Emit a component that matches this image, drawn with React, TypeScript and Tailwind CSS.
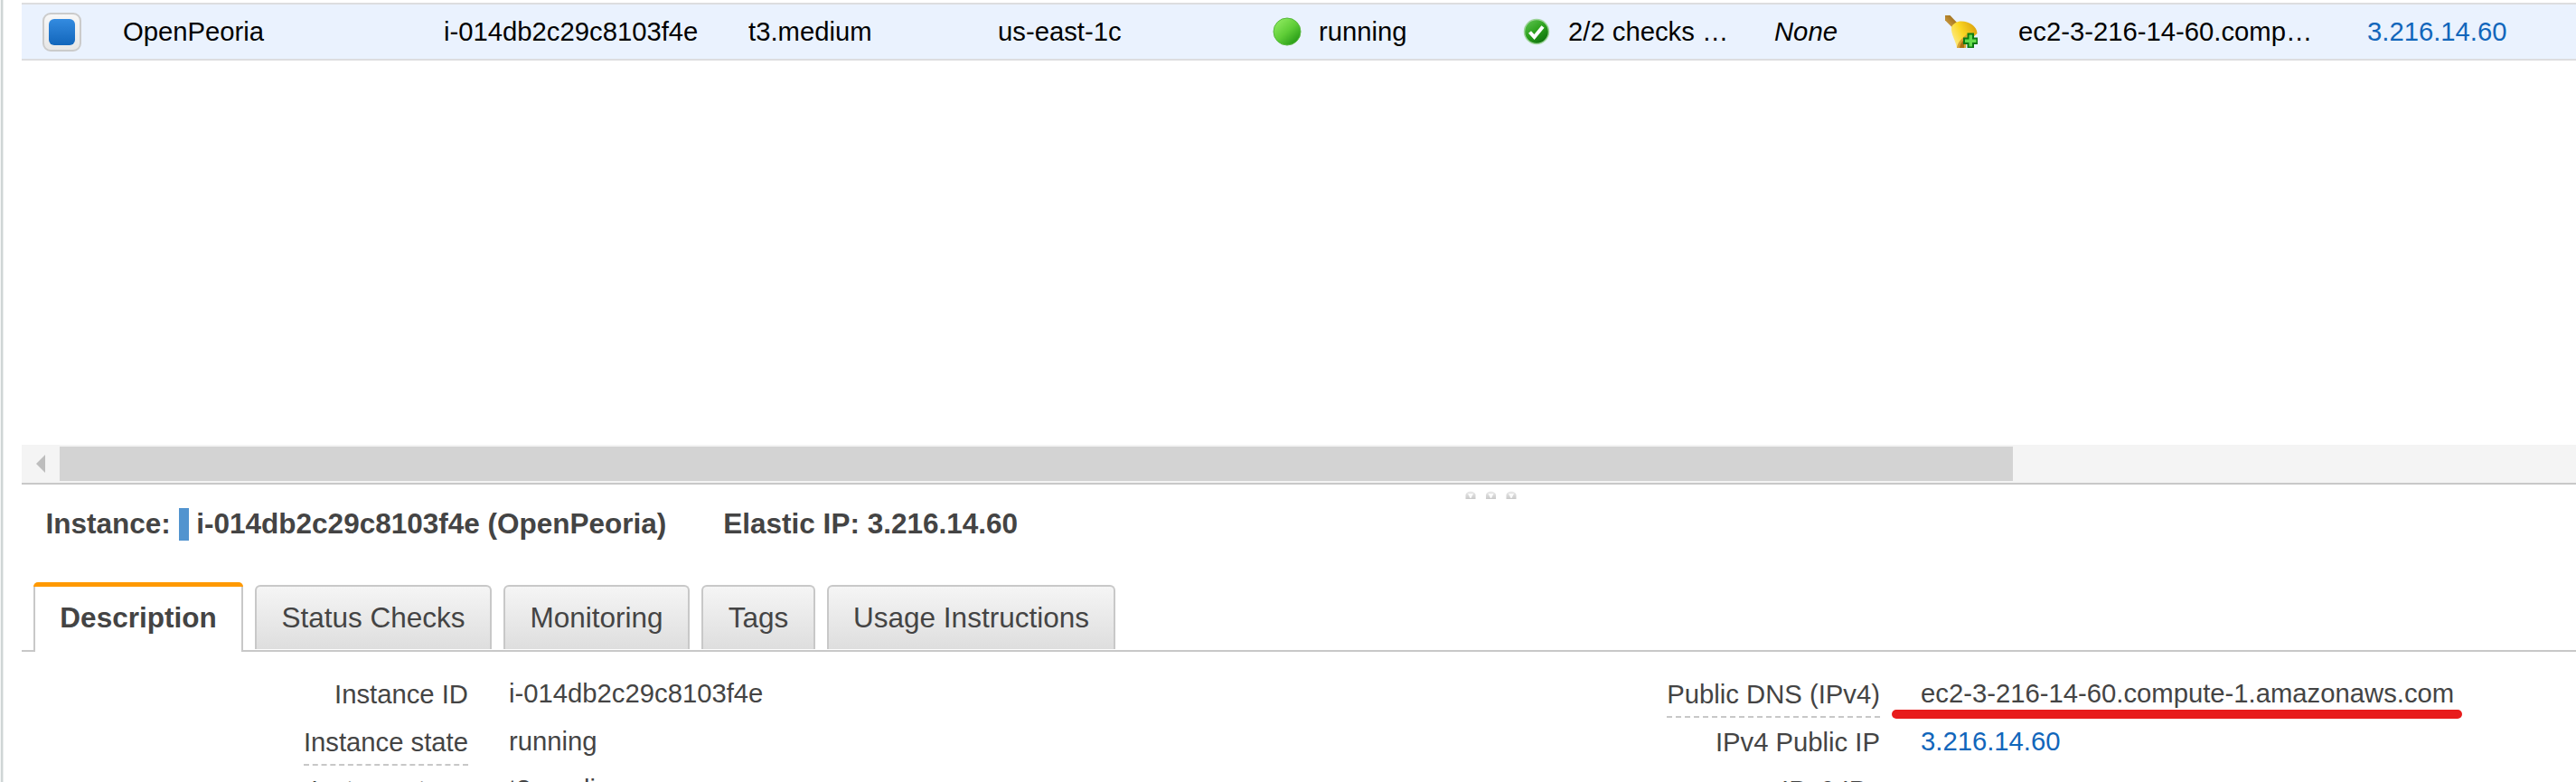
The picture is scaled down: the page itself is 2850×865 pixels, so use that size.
import React from "react";

function CheckIcon() {
  return (
    <svg className="h-[30px] w-[30px] shrink-0" viewBox="0 0 30 30">
      <defs>
        <linearGradient id="ck" x1="0.1" y1="0" x2="0.8" y2="1">
          <stop offset="0" stopColor="#5fc552" />
          <stop offset="0.5" stopColor="#2ba01c" />
          <stop offset="1" stopColor="#0b6d0b" />
        </linearGradient>
      </defs>
      <circle cx="15" cy="15" r="13.5" fill="url(#ck)" stroke="#9ed49a" strokeWidth="1.5" />
      <path d="M7.500 15.500l5 5.500L22 9.500" fill="none" stroke="#fff" strokeWidth="4" />
    </svg>
  );
}

function RunningIcon() {
  return (
    <svg className="h-[32px] w-[32px] shrink-0" viewBox="0 0 32 32">
      <defs>
        <linearGradient id="run" x1="0.15" y1="0.1" x2="0.85" y2="0.9">
          <stop offset="0" stopColor="#8be85c" />
          <stop offset="0.5" stopColor="#5fcd37" />
          <stop offset="1" stopColor="#259a16" />
        </linearGradient>
      </defs>
      <circle cx="16" cy="16" r="15" fill="url(#run)" stroke="#56b83c" strokeWidth="1" />
    </svg>
  );
}

function AlarmIcon() {
  return (
    <svg className="h-[36px] w-[36px] shrink-0" viewBox="0 0 36 36">
      <defs>
        <linearGradient id="bell" x1="0" y1="0.7" x2="1" y2="0.2">
          <stop offset="0" stopColor="#fdeb8c" />
          <stop offset="0.45" stopColor="#fbd723" />
          <stop offset="1" stopColor="#d99f0c" />
        </linearGradient>
        <linearGradient id="handle" x1="0" y1="1" x2="1" y2="0">
          <stop offset="0" stopColor="#d9a94e" />
          <stop offset="1" stopColor="#8f5f0c" />
        </linearGradient>
      </defs>
      <path d="M0 0H5.500L14 9L8.500 14L0 5.500Z" fill="url(#handle)" />
      <path d="M7 13C9 9 13 6.500 18 6.500C27 7 33 11 35 17L35.500 20L18 36H13C12 28 6 21 7 13Z" fill="url(#bell)" />
      <path d="M13 36C14 29 19 25 24 21L23 36Z" fill="#d8a232" />
      <path d="M16 36C16.500 32 18.500 29 21 27V36Z" fill="#a9700f" />
      <path d="M25.500 20.500h5.500v5h4.500v5.500H31v4.500h-5.500V31H21v-5.500h4.500Z" fill="#66dc4c" stroke="#0b7a12" strokeWidth="2" />
    </svg>
  );
}

const tabs: [string, string][] = [
  ["Status Checks", "w-[262px]"],
  ["Monitoring", "w-[206px]"],
  ["Tags", "w-[126px]"],
  ["Usage Instructions", "w-[319px]"],
];

function Grip() {
  return (
    <svg className="h-[9px] w-[58px]" viewBox="0 0 58 9">
      <defs>
        <linearGradient id="grip" x1="0" y1="0" x2="0" y2="1">
          <stop offset="0" stopColor="#ececec" />
          <stop offset="1" stopColor="#c9c9c9" />
        </linearGradient>
      </defs>
      {[0, 22.5, 45].map((x) => (
        <g key={x} transform={`translate(${x} 0)`}>
          <path d="M0.500 9V4Q2 0.500 6 0.500T11.500 4V9Z" fill="url(#grip)" />
          <path d="M3 3h6L6.500 8H5.500Z" fill="#fbfbfb" />
        </g>
      ))}
    </svg>
  );
}

function Detail({ label, value, dashed, link }: { label: string; value: string; dashed?: boolean; link?: boolean }) {
  return (
    <div className="flex h-[53px] items-start">
      <div className="flex w-[494px] justify-end">
        <span
          className={
            dashed
              ? "h-[44px] border-b-2 border-dashed border-[#c8c8c8] leading-[36px]"
              : "h-[44px] leading-[36px]"
          }
        >
          {label}
        </span>
      </div>
      <span className={link ? "ml-[45px] leading-[35px] text-[#1166bb]" : "ml-[45px] leading-[35px]"}>{value}</span>
    </div>
  );
}

export default function App() {
  return (
    <div className="flex h-[865px] w-[2850px] overflow-hidden bg-white font-['Liberation_Sans',Arial,sans-serif] text-[29.25px] whitespace-nowrap text-[#444]">
      <div className="w-[4px] shrink-0 border-x border-r-[#eaeded] border-l-[#f4f6f6] bg-[#cfd5d5]" />
      <div className="ml-[20px] flex w-[2826px] flex-col">
        <div className="mt-[3px] flex h-[64px] shrink-0 items-center border-y-2 border-[#dddddf] bg-[#eaf2fe] text-black">
          <div className="ml-[23px] flex h-[43px] w-[43px] shrink-0 items-center justify-center rounded-[9px] border-2 border-[#cbcbcb] bg-gradient-to-b from-[#f7f7f7] to-[#e7e7e7]">
            <div className="h-[29px] w-[29px] rounded-[6px] bg-gradient-to-b from-[#338be0] to-[#1166bb]" />
          </div>
          <span className="ml-[46px] w-[355px] shrink-0 pt-[2px]">OpenPeoria</span>
          <span className="w-[337px] shrink-0 pt-[2px]">i-014db2c29c8103f4e</span>
          <span className="w-[276px] shrink-0 pt-[2px]">t3.medium</span>
          <span className="w-[304px] shrink-0 pt-[2px]">us-east-1c</span>
          <RunningIcon />
          <span className="ml-[19px] w-[226px] shrink-0 pt-[2px]">running</span>
          <CheckIcon />
          <span className="ml-[20px] w-[228px] shrink-0 pt-[2px]">2/2 checks …</span>
          <span className="w-[189px] shrink-0 pt-[2px] italic">None</span>
          <AlarmIcon />
          <span className="ml-[45px] w-[386px] shrink-0 pt-[2px]">ec2-3-216-14-60.comp…</span>
          <span className="shrink-0 pt-[2px] text-[#1166bb]">3.216.14.60</span>
        </div>

        <div className="mt-[425px] flex h-[44px] shrink-0 items-stretch border-b-2 border-[#c8c8c8] bg-[#f4f4f4]">
          <svg className="ml-[16px] h-[42px] w-[26px]" viewBox="0 0 26 42">
            <path d="M0 21L10 11V31Z" fill="#bdbdbd" />
          </svg>
          <div className="mt-[2px] h-[38px] w-[2161px] bg-[#d3d3d3]" />
        </div>
        <div className="flex h-[10px] shrink-0 pt-[7px] pl-[1597px]">
          <Grip />
        </div>

        <div className="flex h-[68px] shrink-0 items-center pl-[26.500px] text-[31.5px] font-bold">
          <span>Instance:</span>
          <span className="ml-[9px] h-[36px] w-[11px] bg-[#5294cf]" />
          <span className="ml-[8.500px]">i-014db2c29c8103f4e (OpenPeoria)</span>
          <span className="ml-[63px]">Elastic IP: 3.216.14.60</span>
        </div>

        <div className="mt-[30px] flex h-[77px] shrink-0 items-end text-[31.5px]">
          <div className="h-[2px] w-[13px] bg-[#c8c8c8]" />
          <div className="flex h-[77px] w-[232px] flex-col overflow-hidden rounded-t-[5px]">
            <div className="h-[5px] shrink-0 bg-[#ff9900]" />
            <div className="flex grow items-start justify-center border-x-2 border-[#c8c8c8] pt-[16px] leading-[36px] font-bold">
              Description
            </div>
          </div>
          <div className="flex h-[74px] grow gap-[13px] border-b-2 border-[#c8c8c8] pb-px pl-[13px]">
            {tabs.map(([name, width]) => (
              <div
                key={name}
                className={`${width} flex shrink-0 justify-center rounded-t-[6px] border-2 border-b-0 border-[#c8c8c8] bg-gradient-to-b from-[#f5f5f5] to-[#dedede] pt-[16px] leading-[36px]`}
              >
                {name}
              </div>
            ))}
          </div>
        </div>

        <div className="mt-[29px] flex h-[115px] shrink-0 overflow-hidden">
          <div className="w-[1562px] shrink-0">
            <Detail label="Instance ID" value="i-014db2c29c8103f4e" />
            <Detail label="Instance state" value="running" dashed />
            <Detail label="Instance type" value="t3.medium" />
          </div>
          <div className="relative w-[1264px]">
            <Detail label="Public DNS (IPv4)" value="ec2-3-216-14-60.compute-1.amazonaws.com" dashed />
            <Detail label="IPv4 Public IP" value="3.216.14.60" link />
            <Detail label="IPv6 IPs" value="-" />
            <div className="absolute top-[35px] left-[507px] h-[10px] w-[631px] rounded-full bg-[#e81c1c]" />
          </div>
        </div>
      </div>
    </div>
  );
}
